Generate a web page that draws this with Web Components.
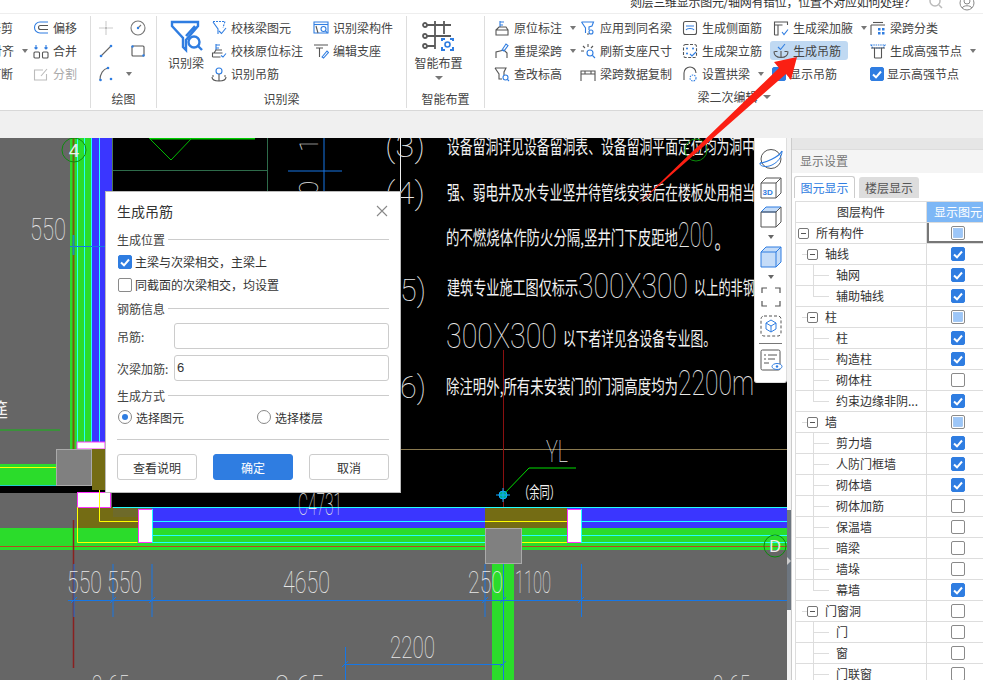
<!DOCTYPE html>
<html lang="zh">
<head>
<meta charset="utf-8">
<title>生成吊筋</title>
<style>
  html, body { margin: 0; height: 100%; overflow: hidden; background: #fff; }
  body { font: 12px "Noto Sans CJK SC", "Liberation Sans", sans-serif; color: #333; }
</style>
</head>
<body>
<gl-app></gl-app>

<script>
const B = '#2f7de1', D = '#555', G = '#bbb';

// 16x16 icons, hand drawn from the reference
const ICONS = {
  offset: `<path d="M15 2H7a5.5 5.5 0 0 0 0 11h8" stroke="${B}"/><path d="M15 5.5H7.5a2 2 0 0 0 0 4H15" stroke="${D}"/>`,
  merge: `<rect x="1" y="9" width="5.5" height="6" rx="1" stroke="${D}"/><rect x="9.5" y="9" width="5.5" height="6" rx="1" stroke="${D}"/><path d="M3 2v4M1.5 4.5 3 6l1.500-1.500M13 2v4M11.500 4.500 13 6l1.500-1.500" stroke="${B}"/>`,
  split: `<path d="M10 4H1.500v10h12V8M8 10l6-7" stroke="${G}"/>`,
  point: `<path d="M8 1v5M8 10v5M1 8h5M10 8h5" stroke="#ccc"/><circle cx="8" cy="8" r="1.500" fill="#bbb"/>`,
  gauge: `<circle cx="8" cy="8" r="7" stroke="#777"/><path d="M8 8l3-3" stroke="#777"/><circle cx="8" cy="8" r="1.200" fill="${B}"/>`,
  line: `<path d="M3 13 13 3" stroke="#666"/><circle cx="3" cy="13" r="1.300" fill="${B}"/><circle cx="13" cy="3" r="1.300" fill="${B}"/>`,
  rect: `<rect x="2" y="3" width="12" height="10" rx="1" stroke="#555"/><circle cx="2.500" cy="3.500" r="1.200" fill="${B}"/><circle cx="13.500" cy="12.500" r="1.200" fill="${B}"/>`,
  arc: `<path d="M2 14C2 8 5 3 10 2" stroke="#666"/><circle cx="2.500" cy="14" r="1.300" fill="${B}"/><circle cx="10" cy="2" r="1.300" fill="${B}"/><circle cx="13" cy="13" r="1.300" fill="${B}"/>`,
  check1: `<path d="M2 1.500h12l-2 6" stroke="${B}" stroke-dasharray="2 1"/><path d="M2 2l5 7v5" stroke="${B}"/><path d="M8 11l2.500 2.500L15 8" stroke="${B}"/>`,
  check2: `<path d="M5 1v6M5 2h4M5 5h3" stroke="${B}"/><path d="M1.500 14V10h10M1.500 14h8M3 10l2-3h6" stroke="${D}"/><path d="M10 12.500l2 1.500 3-3.500" stroke="${B}"/>`,
  anchor: `<circle cx="8" cy="5" r="3" stroke="${B}"/><path d="M1 11c0 3 3 4 7 4s7-1 7-4M8 8v7" stroke="${D}"/><path d="M1 10h2M13 10h2" stroke="${D}"/>`,
  recog: `<path d="M1 2h14v11H1z" stroke="${B}"/><path d="M1 4.500h14" stroke="${B}"/><path d="M3 6l2 7" stroke="${D}"/><circle cx="10.500" cy="9" r="2.500" stroke="${B}"/><path d="M12.500 11l2 2" stroke="${B}"/>`,
  support: `<path d="M1 2h14M3 5h7M6.500 5v9" stroke="${D}"/><path d="M9 14l5-6 1.500 1.500L10.500 15z" stroke="${B}"/>`,
  orig: `<path d="M6 1v6M6 2h4M6 5h3" stroke="${B}"/><path d="M2 15V10h12v5zM2 10l3-3h7l2 3" stroke="${D}"/>`,
  apply: `<path d="M1.500 2h12l-1.500 4-3 1v3M1.500 2l4 6v5" stroke="${B}"/><circle cx="11" cy="12" r="2" stroke="${B}"/><path d="M7 14h2" stroke="${D}"/>`,
  side: `<rect x="1.500" y="1.500" width="13" height="13" rx="2" stroke="${D}"/><path d="M4 6h8M4 10c1-2 7-2 8 0" stroke="${B}"/>`,
  haunch: `<path d="M1.500 15V2h13v3" stroke="${D}"/><path d="M1.500 5h8M5 5v10H1.500" stroke="${D}"/><path d="M9 12l2 2.500 4-5" stroke="${B}"/>`,
  kind: `<path d="M1 15V5M1 5h14" stroke="${D}"/><path d="M3 2.500h10" stroke="${D}"/><path d="M8 8h2.500v2.500H8zM12 8h2.500v2.500H12zM8 12h2.500v2.500H8zM12 12h2.500v2.500H12z" fill="${B}"/>`,
  lift: `<path d="M2 15V9l8-2 3 3v5" stroke="${D}"/><path d="M8 7l4-6 2 1.500-4 5.500z" stroke="${B}"/>`,
  refresh: `<circle cx="10" cy="10" r="3" stroke="${B}"/><path d="M12.500 12.500 15 15" stroke="${B}"/><path d="M1 8h3M3 3l2 2M8 1v3M13 3l-2 2" stroke="${D}"/>`,
  frame: `<rect x="1.500" y="1.500" width="13" height="13" rx="2" stroke="${D}" stroke-dasharray="3 1.500"/><circle cx="5" cy="5.500" r="1" fill="${B}"/><circle cx="11" cy="5.500" r="1" fill="${B}"/><circle cx="5" cy="10.500" r="1" fill="${B}"/><path d="M8 11l2 2 4-4" stroke="${B}"/>`,
  hanger: `<path d="M1 8.500c0 4 3 6 7 6s7-2 7-6M8 8v6M1.500 8.500h3M11.500 8.500h3" stroke="${D}"/><path d="M5 4l2.500 2.500L12 1" stroke="${B}"/>`,
  strong: `<path d="M1 2h14l-2 3H3z" stroke="${B}" stroke-dasharray="1.500 .8"/><path d="M1 5h14M4.500 5v10M11.500 5v10M4.500 15h7" stroke="${D}"/>`,
  query: `<path d="M1 2h11l-2 4v3M1 2l4 6v5h3" stroke="${D}"/><circle cx="11.500" cy="11.500" r="2.500" stroke="${B}"/><path d="M13.500 13.500 15 15" stroke="${B}"/>`,
  copy: `<path d="M1 15V5h14v10M1 8h14M5 5v3M11 5v3" stroke="${D}"/>`,
  arch: `<path d="M2 14V7a6 6 0 0 1 12 0" stroke="${D}"/><circle cx="11" cy="12" r="3" stroke="${B}" stroke-dasharray="1.500 1"/>`
};

class GlIcon extends HTMLElement {
  constructor() {
    super();
    const shadow = this.attachShadow({ mode: 'open' });
    const size = this.getAttribute('size') || 16;
    shadow.innerHTML = `
      <style>:host { display: inline-flex; width: ${size}px; height: ${size}px; flex: none; } svg { display: block; }</style>
      <svg width="${size}" height="${size}" viewBox="0 0 16 16" fill="none" stroke-width="1.100">${ICONS[this.getAttribute('name')] || ''}</svg>`;
  }
}
customElements.define('gl-icon', GlIcon);

class GlCheck extends HTMLElement {
  constructor() {
    super();
    const shadow = this.attachShadow({ mode: 'open' });
    const state = this.getAttribute('state') || 'off';
    let inner = '';
    if (state === 'on') inner = '<path d="M3 7.500l3 2.800L11 4.500" fill="none" stroke="#fff" stroke-width="2"/>';
    if (state === 'mixed') inner = '<rect x="2.500" y="2.500" width="9" height="9" fill="#9cc6f8" stroke="#7fb0ec" stroke-width=".5"/>';
    shadow.innerHTML = `
      <style>
        :host { display: inline-flex; width: 14px; height: 14px; flex: none; }
        .box { width: 14px; height: 14px; box-sizing: border-box; border-radius: 2px; border: 1px solid #8a8a8a; background: #fff; position: relative; overflow: hidden; }
        .on { background: ${B}; border-color: ${B}; }
        svg { position: absolute; left: -1px; top: -1px; }
      </style>
      <div class="box ${state}"><svg width="14" height="14" viewBox="0 0 14 14">${inner}</svg></div>`;
  }
}
customElements.define('gl-check', GlCheck);

class RbItem extends HTMLElement {
  constructor() {
    super();
    const shadow = this.attachShadow({ mode: 'open' });
    const icon = this.getAttribute('icon');
    const check = this.getAttribute('check');
    const lead = check ? `<gl-check state="${check}"></gl-check>` : (icon ? `<gl-icon name="${icon}"></gl-icon>` : '');
    shadow.innerHTML = `
      <style>
        :host { display: flex; align-items: center; height: 23px; white-space: nowrap; color: #444; }
        :host([disabled]) { color: #aaa; }
        .row { display: flex; align-items: center; gap: 4px; height: 19px; }
        :host([check]) .row { gap: 3px; }
        :host([active]) .row { background: #c0d9f2; border-radius: 3px; padding: 0 7px 0 3px; margin-left: -3px; }
        .caret { width: 0; height: 0; border: 3.500px solid transparent; border-top: 4px solid #777; border-bottom: 0; margin-left: 4px; }
      </style>
      <div class="row">${lead}<span><slot></slot></span>${this.hasAttribute('caret') ? '<i class="caret"></i>' : ''}</div>`;
  }
}
customElements.define('rb-item', RbItem);

class RbGroup extends HTMLElement {
  constructor() {
    super();
    const shadow = this.attachShadow({ mode: 'open' });
    shadow.innerHTML = `
      <style>
        :host { display: flex; flex-direction: column; box-sizing: border-box; height: 92px; margin-top: 2px; border-right: 1px solid #ddd; overflow: hidden; flex: none; }
        :host([noline]) { border-right: 0; overflow: visible; }
        .body { flex: 1; display: flex; }
        .label { height: 18px; line-height: 18px; text-align: center; color: #444; display: flex; justify-content: center; align-items: center; gap: 5px; }
        :host([noline]) .label { position: relative; top: -2px; }
        .caret { width: 0; height: 0; border: 4px solid transparent; border-top: 4px solid #777; border-bottom: 0; }
      </style>
      <div class="body"><slot></slot></div>
      <div class="label"><slot name="label"></slot>${this.hasAttribute('caret') ? '<i class="caret"></i>' : ''}</div>`;
  }
}
customElements.define('rb-group', RbGroup);

class GlRibbon extends HTMLElement {
  constructor() {
    super();
    const shadow = this.attachShadow({ mode: 'open' });
    shadow.innerHTML = `
      <style>
        :host { display: flex; box-sizing: border-box; height: 98px; background: #fff; border-top: 1px solid #eee; border-bottom: 1px solid #d8d8d8; overflow: hidden; }
        .rows { display: grid; grid-auto-rows: 23px; align-content: start; }
        .clip { width: 33px; display: flex; flex-direction: column; align-items: flex-end; }
        .clip rb-item { margin-right: 20px; }
        .clip rb-item.c { margin-right: 5px; }
        .big { display: flex; flex-direction: column; align-items: center; color: #444; padding-top: 3px; line-height: 16px; }
        .big svg { display: block; margin-bottom: 2px; }
        .caret { width: 0; height: 0; border: 4px solid transparent; border-top: 4px solid #777; border-bottom: 0; margin-top: 5px; }
        .hi { grid-template-columns: 86px 102px 91px 97px 112px; padding-left: 9px; }
        .draw { grid-template-columns: 32px 32px; padding-left: 7px; }
      </style>

      <rb-group style="width:91px">
        <div class="clip">
          <rb-item>修剪</rb-item>
          <rb-item class="c" caret>对齐</rb-item>
          <rb-item>打断</rb-item>
        </div>
        <div class="rows">
          <rb-item icon="offset">偏移</rb-item>
          <rb-item icon="merge">合并</rb-item>
          <rb-item icon="split" disabled>分割</rb-item>
        </div>
      </rb-group>

      <rb-group style="width:66px">
        <div class="rows draw">
          <rb-item icon="point"></rb-item><rb-item icon="gauge"></rb-item>
          <rb-item icon="line"></rb-item><rb-item icon="rect"></rb-item>
          <rb-item icon="arc" caret></rb-item>
        </div>
        <span slot="label">绘图</span>
      </rb-group>

      <rb-group style="width:250px">
        <div class="big" style="width:38px;margin:0 6px 0 10px">
          <svg width="34" height="34" viewBox="0 0 34 34" fill="none" stroke="${B}" stroke-width="2.400">
            <path d="M3 3h26v4L17 21v10L14 28V19L3 7zM26 7l-9 10"/>
            <circle cx="25" cy="23" r="5.500"/><path d="M29 27l4 4"/>
          </svg>
          <span>识别梁</span>
        </div>
        <div class="rows" style="width:102px">
          <rb-item icon="check1">校核梁图元</rb-item>
          <rb-item icon="check2">校核原位标注</rb-item>
          <rb-item icon="anchor">识别吊筋</rb-item>
        </div>
        <div class="rows">
          <rb-item icon="recog">识别梁构件</rb-item>
          <rb-item icon="support">编辑支座</rb-item>
        </div>
        <span slot="label">识别梁</span>
      </rb-group>

      <rb-group style="width:78px">
        <div class="big" style="width:100%;box-sizing:border-box;padding-right:14px">
          <svg width="34" height="34" viewBox="0 0 34 34" fill="none" stroke-width="1.800">
            <path d="M3 6h26M3 17h26M3 27h10M13 2v28M22 2v13" stroke="#5a5a5a"/>
            <circle cx="3" cy="6" r="2" fill="#fff" stroke="#5a5a5a"/><circle cx="3" cy="17" r="2" fill="#fff" stroke="#5a5a5a"/><circle cx="3" cy="27" r="2" fill="#fff" stroke="#5a5a5a"/>
            <path d="M20 22v-2h3M28 20h3v2M31 28v3h-3M23 31h-3v-3" stroke="${B}" stroke-width="2"/>
            <circle cx="25.500" cy="25.500" r="2.500" stroke="${B}" stroke-width="1.600"/>
          </svg>
          <span>智能布置</span>
          <i class="caret"></i>
        </div>
        <span slot="label">智能布置</span>
      </rb-group>

      <rb-group noline caret style="width:250px;flex:1">
        <div class="rows hi">
          <rb-item icon="orig" caret>原位标注</rb-item>
          <rb-item icon="apply">应用到同名梁</rb-item>
          <rb-item icon="side">生成侧面筋</rb-item>
          <rb-item icon="haunch" caret>生成梁加腋</rb-item>
          <rb-item icon="kind">梁跨分类</rb-item>

          <rb-item icon="lift" caret>重提梁跨</rb-item>
          <rb-item icon="refresh">刷新支座尺寸</rb-item>
          <rb-item icon="frame">生成架立筋</rb-item>
          <rb-item icon="hanger" active>生成吊筋</rb-item>
          <rb-item icon="strong" caret>生成高强节点</rb-item>

          <rb-item icon="query">查改标高</rb-item>
          <rb-item icon="copy">梁跨数据复制</rb-item>
          <rb-item icon="arch" caret>设置拱梁</rb-item>
          <rb-item check="on" style="margin-left:-1px">显示吊筋</rb-item>
          <rb-item check="on">显示高强节点</rb-item>
        </div>
        <span slot="label" style="margin-left:0">梁二次编辑</span>
      </rb-group>`;
  }
}
customElements.define('gl-ribbon', GlRibbon);

class GlTitle extends HTMLElement {
  constructor() {
    super();
    const shadow = this.attachShadow({ mode: 'open' });
    shadow.innerHTML = `
      <style>
        :host { display: flex; height: 13px; background: #fff; overflow: hidden; padding-left: 630px; align-items: flex-end; font-size: 12px; color: #333; white-space: nowrap; }
        .q { line-height: 16px; margin-bottom: 3px; width: 296px; letter-spacing: -.3px; }
        svg { flex: none; }
      </style>
      <div class="q">剡层三维显示图元/轴网有错位，位置不对应如何处理？</div>
      <svg width="16" height="16" viewBox="0 0 16 16" fill="none" stroke="#bbb" stroke-width="1.500" style="margin-left:2px;margin-bottom:2px"><circle cx="7" cy="6" r="5"/><path d="M11 10l3 3"/></svg>
      <svg width="16" height="16" viewBox="0 0 16 16" fill="none" stroke="#888" style="margin-left:15px;margin-bottom:2px"><circle cx="8" cy="8" r="7"/><circle cx="8" cy="6" r="3"/><path d="M3 13c2-3 8-3 10 0"/></svg>`;
  }
}
customElements.define('gl-title', GlTitle);

class CadCanvas extends HTMLElement {
  constructor() {
    super();
    const shadow = this.attachShadow({ mode: 'open' });
    shadow.innerHTML = `
      <style>
        :host { display: block; width: 787px; height: 542px; flex: none; background: #666; overflow: hidden; }
        svg { display: block; }
        .cn { font: 400 19px "Noto Sans CJK SC", sans-serif; fill: #f2f2f2; }
        .num { font: 100 31px Roboto, "Liberation Sans", sans-serif; fill: #e8e8e8; }
        .big { font-size: 35px; }
      </style>
      <svg width="787" height="542" viewBox="0 138 787 542">
        <rect x="0" y="138" width="787" height="542" fill="#666"/>
        <rect x="112" y="138" width="675" height="370" fill="#000"/>

        <!-- axis 4 wall -->
        <rect x="70" y="138" width="24" height="312" fill="#2bdc2b"/>
        <rect x="92" y="138" width="20" height="312" fill="#3a36ff"/>
        <path d="M77.500 138v312M84.500 138v312M91.500 138v312M99.500 138v312" stroke="#2ff" stroke-width="1"/>
        <path d="M73.500 138v312" stroke="#7a5a10" stroke-width="2"/>
        <path d="M112.500 138v312" stroke="#4f7a4f"/>
        <circle cx="74" cy="150" r="12" fill="none" stroke="#0f8a0f"/>
        <text x="74" y="157" text-anchor="middle" font-family="Liberation Sans" font-size="19" fill="#eee">4</text>
        <text class="num" x="30" y="240" textLength="36" lengthAdjust="spacingAndGlyphs">550</text>
        <path d="M70 246.500h35" stroke="#1677e6"/><path d="M73.500 235v20" stroke="#1c8fb0" stroke-width="2"/>

        <!-- left bits -->
        <text class="cn" x="-11" y="417">筵</text>
        <path d="M0 430h60" stroke="#2ea02e" stroke-width="1.500"/>
        <rect x="0" y="464" width="56" height="22" fill="#2bdc2b"/><path d="M0 467.500h56" stroke="#ff0"/>
        <rect x="0" y="486" width="112" height="7" fill="#000"/><path d="M0 485.500h112" stroke="#2cc"/>

        <!-- top-of-drawing lines -->
        <path d="M150 138.500h105" stroke="#0c0" stroke-width="2"/>
        <path d="M149 138l22 22 21-22" fill="none" stroke="#0b0"/>
        <path d="M113 170.500h154M267.500 138v60" stroke="#2e6b4a"/>
        <path d="M288 171h54M324 138v60" stroke="#1677e6"/>
        <text class="num" transform="translate(318 152) rotate(-90)" style="font-size:26px">14</text>
        <text class="num" transform="translate(318 195) rotate(-90)" style="font-size:26px">0</text>
        <path d="M400.500 138v300" stroke="#eee"/>

        <!-- notes -->
        <g class="cad">
          <text class="num" x="385" y="157" textLength="40" lengthAdjust="spacingAndGlyphs">(3)</text>
          <text class="cn" x="447" y="154" textLength="308" lengthAdjust="spacingAndGlyphs">设备留洞详见设备留洞表、设备留洞平面定位均为洞中</text>
          <text class="num" x="385" y="204" textLength="40" lengthAdjust="spacingAndGlyphs">(4)</text>
          <text class="cn" x="447" y="200" textLength="308" lengthAdjust="spacingAndGlyphs">强、弱电井及水专业竖井待管线安装后在楼板处用相当</text>
          <text class="cn" x="446" y="245" textLength="232" lengthAdjust="spacingAndGlyphs">的不燃烧体作防火分隔,竖井门下皮距地</text>
          <text class="num big" x="678" y="247" textLength="57" lengthAdjust="spacingAndGlyphs">200。</text>
          <text class="num" x="400" y="301" textLength="26" lengthAdjust="spacingAndGlyphs">5)</text>
          <text class="cn" x="447" y="295" textLength="131" lengthAdjust="spacingAndGlyphs">建筑专业施工图仅标示</text>
          <text class="num big" x="578" y="298" textLength="110" lengthAdjust="spacingAndGlyphs">300X300</text>
          <text class="cn" x="694" y="295" textLength="61" lengthAdjust="spacingAndGlyphs">以上的非钢</text>
          <text class="num big" x="446" y="348" textLength="111" lengthAdjust="spacingAndGlyphs">300X300</text>
          <text class="cn" x="563" y="346" textLength="153" lengthAdjust="spacingAndGlyphs">以下者详见各设备专业图。</text>
          <text class="num" x="400" y="398" textLength="26" lengthAdjust="spacingAndGlyphs">6)</text>
          <text class="cn" x="446" y="394" textLength="232" lengthAdjust="spacingAndGlyphs">除注明外,所有未安装门的门洞高度均为</text>
          <text class="num big" x="678" y="395" textLength="76" lengthAdjust="spacingAndGlyphs">2200m</text>
        </g>
        <circle cx="696" cy="150" r="11" fill="none" stroke="#0a8a0a"/>

        <path d="M113 449.500h674" stroke="#8a7a50"/>
        <path d="M503.500 350v172" stroke="#8a1010"/>

        <!-- beam D -->
        <rect x="77" y="442" width="28" height="7" fill="#fff" stroke="#f3f" stroke-width="1"/>
        <rect x="92" y="449" width="14" height="41" fill="#746c14"/>
        <rect x="77" y="507" width="61" height="21" fill="#746c14"/>
        <rect x="113" y="508" width="25" height="9" fill="#6e6a2a"/>
        <rect x="0" y="528" width="138" height="15" fill="#2bdc2b"/>
        <rect x="77.500" y="492.500" width="33" height="15" fill="#fff" stroke="#f3f"/>
        <rect x="152" y="508" width="635" height="20" fill="#3a36ff"/>
        <rect x="152" y="528" width="635" height="15" fill="#2bdc2b"/>
        <rect x="485" y="508" width="82" height="20" fill="#746c14"/>
        <path d="M113 507.500h674M152 521.500h635M152 535.500h635M152 542.500h635" stroke="#2ff"/>
        <path d="M99.500 490v31.500h39M77.500 507v35.500h60M485 521.500h82M521 542.500h46" stroke="#ff0" fill="none"/>
        <rect x="138.500" y="509.500" width="14" height="33" fill="#fff" stroke="#f3f"/>
        <rect x="567.500" y="509.500" width="14" height="33" fill="#fff" stroke="#f3f"/>
        <path d="M152.500 509v34M581.500 509v34" stroke="#2ff"/>
        <rect x="0" y="543" width="787" height="7" fill="#2bdc2b"/>
        <path d="M0 546.500h787" stroke="#b54a20"/>

        <!-- columns -->
        <rect x="56.500" y="449.500" width="35" height="36" fill="#808080" stroke="#aaa"/>
        <rect x="492" y="564" width="22" height="116" fill="#2bdc2b"/>
        <rect x="485.500" y="528.500" width="36" height="35" fill="#808080" stroke="#aaa"/>
        <path d="M73.500 520v148" stroke="#8a2020" stroke-width="1.500"/>
        <path d="M503.500 618v28" stroke="#8a2020"/>
        <path d="M503.500 564v116" stroke="#1677e6"/>

        <!-- leader -->
        <path d="M503 495l26-27h47" stroke="#0d0" fill="none"/>
        <circle cx="503" cy="495" r="4" fill="#0a8" stroke="#1af"/>
        <path d="M496 495h14M503 488v14" stroke="#1af"/>
        <text class="num" x="546" y="462" textLength="22" lengthAdjust="spacingAndGlyphs">YL</text>
        <text class="cn" x="519" y="498" textLength="41" lengthAdjust="spacingAndGlyphs" style="font-size:16px">（余同）</text>
        <text class="num" x="298" y="515" textLength="44" lengthAdjust="spacingAndGlyphs">C4731</text>
        <circle cx="775" cy="546" r="11" fill="none" stroke="#0a8a0a"/>
        <text x="775" y="552" text-anchor="middle" font-family="Liberation Sans" font-size="16" fill="#eee">D</text>

        <!-- dimensions -->
        <path d="M68 600.500h719M345 664.500h158" stroke="#1677e6"/>
        <path d="M74 564v53M113 564v53M152 564v53M485 564v53M581.500 564v53M345.500 647v33" stroke="#1677e6"/>
        <path d="M71 603l6-6M110 603l6-6M149 603l6-6M482 603l6-6M500 603l6-6M578 603l6-6M342 667l6-6M500 667l6-6" stroke="#1677e6"/>
        <text class="num" x="67" y="593" textLength="35" lengthAdjust="spacingAndGlyphs">550</text>
        <text class="num" x="107" y="593" textLength="35" lengthAdjust="spacingAndGlyphs">550</text>
        <text class="num" x="283" y="593" textLength="47" lengthAdjust="spacingAndGlyphs">4650</text>
        <text class="num" x="468" y="593" textLength="35" lengthAdjust="spacingAndGlyphs">250</text>
        <text class="num" x="515" y="593" textLength="36" lengthAdjust="spacingAndGlyphs">1100</text>
        <text class="num" x="390" y="658" textLength="45" lengthAdjust="spacingAndGlyphs">2200</text>
        <text class="num" x="79" y="697" textLength="50" lengthAdjust="spacingAndGlyphs">φ8-65</text>
        <text class="num" x="258" y="697" textLength="66" lengthAdjust="spacingAndGlyphs">φ8-65</text>
        <text class="num" x="700" y="697" textLength="50" lengthAdjust="spacingAndGlyphs">φ8-65</text>
      </svg>`;
  }
}
customElements.define('cad-canvas', CadCanvas);

class ViewBar extends HTMLElement {
  constructor() {
    super();
    const shadow = this.attachShadow({ mode: 'open' });
    const s = '#555';
    shadow.innerHTML = `
      <style>
        :host { position: absolute; left: 754px; top: 0; width: 33px; height: 245px; box-sizing: border-box; background: #fff; border: 1px solid #ddd; border-top: 0; border-radius: 0 0 3px 3px; display: flex; flex-direction: column; align-items: center; padding-top: 9px; }
        svg { display: block; flex: none; }
        .caret { width: 0; height: 0; border: 3.500px solid transparent; border-top: 4px solid #666; border-bottom: 0; margin: 6px 0 6px; }
        hr { width: 23px; border: 0; border-top: 1px solid #777; margin: 5px 0 4px; }
      </style>
      <svg width="24" height="24" viewBox="0 0 24 24" fill="none" stroke="${s}"><ellipse cx="12" cy="12" rx="10" ry="9.500"/><path d="M1 16C6 16 20 10 23 4" stroke="${B}" stroke-width="1.300"/><path d="M1 16c-1 3 6 5 12 2s10-8 10-14" stroke="${B}"/></svg>
      <svg style="margin-top:5px" width="24" height="24" viewBox="0 0 24 24" fill="none" stroke="${s}"><path d="M2 7l5-5h15v15l-5 5H2zM2 7h15v15M17 7l5-5"/><text x="3.500" y="19" font-family="Liberation Sans" font-size="8" font-weight="700" fill="${B}" stroke="none">3D</text></svg>
      <svg style="margin-top:5px" width="24" height="24" viewBox="0 0 24 24" fill="none" stroke="${s}"><path d="M2 7l5-5h15l-5 5z" fill="#c5dcf8" stroke="${B}"/><path d="M2 7h15v15H2zM17 7l5-5v15l-5 5"/></svg>
      <i class="caret"></i>
      <svg width="24" height="24" viewBox="0 0 24 24" fill="#c5dcf8" stroke="${B}"><path d="M2 7l5-5h15v15l-5 5H2z"/><path d="M2 7h15v15M17 7l5-5" fill="none"/></svg>
      <i class="caret"></i>
      <svg width="24" height="24" viewBox="0 0 24 24" fill="none" stroke="${s}" stroke-width="1.200"><path d="M3 8V3h5M16 3h5v5M21 16v5h-5M8 21H3v-5"/></svg>
      <svg style="margin-top:5px" width="24" height="24" viewBox="0 0 24 24" fill="none" stroke="${s}"><rect x="2" y="2" width="20" height="20" rx="3" stroke-dasharray="3 2"/><path d="M12 6l5 3v6l-5 3-5-3V9zM7 9l5 3 5-3M12 12v6" stroke="${B}"/></svg>
      <hr>
      <svg width="24" height="24" viewBox="0 0 24 24" fill="none" stroke="${s}"><rect x="2" y="2" width="19" height="20" rx="1.500"/><path d="M5 7h2M9 7h9M5 11h2M9 11h7M5 15h5"/><ellipse cx="18" cy="18.500" rx="5" ry="3" fill="#fff" stroke="${B}"/><circle cx="18" cy="18.500" r="1.200" fill="${B}" stroke="none"/></svg>`;
  }
}
customElements.define('view-bar', ViewBar);

class DlgSection extends HTMLElement {
  constructor() {
    super();
    const shadow = this.attachShadow({ mode: 'open' });
    shadow.innerHTML = `
      <style>
        :host { display: flex; align-items: center; gap: 3px; height: 18px; color: #444; }
        i { flex: 1; border-top: 1px solid #ccc; }
      </style>
      <slot></slot><i></i>`;
  }
}
customElements.define('dlg-section', DlgSection);

class DlgButton extends HTMLElement {
  constructor() {
    super();
    const shadow = this.attachShadow({ mode: 'open' });
    shadow.innerHTML = `
      <style>
        :host { display: flex; align-items: center; justify-content: center; width: 80px; height: 26px; box-sizing: border-box; border: 1px solid #ccc; border-radius: 3px; background: #fff; color: #333; }
        :host([primary]) { background: ${B}; border-color: ${B}; color: #fff; }
      </style>
      <slot></slot>`;
  }
}
customElements.define('dlg-button', DlgButton);

class HangerDialog extends HTMLElement {
  constructor() {
    super();
    const shadow = this.attachShadow({ mode: 'open' });
    shadow.innerHTML = `
      <style>
        :host { position: absolute; left: 105px; top: 53px; width: 296px; height: 302px; box-sizing: border-box; background: #fff; border: 1px solid #bbb; padding: 0 11px; color: #333; display: block; }
        .title { display: flex; justify-content: space-between; align-items: center; height: 37px; font-size: 14px; }
        .title svg { margin-right: 1px; }
        .opt { display: flex; align-items: center; gap: 3px; height: 23px; padding-left: 1px; }
        .field { display: flex; align-items: center; height: 26px; }
        .field label { width: 57px; flex: none; color: #444; }
        .input { flex: 1; height: 26px; box-sizing: border-box; border: 1px solid #ccc; border-radius: 3px; padding-left: 2px; line-height: 24px; font-family: "Liberation Sans", sans-serif; font-size: 13px; }
        .radios { display: flex; height: 22px; align-items: center; margin-top: 2px; padding-left: 1px; }
        .radio { display: flex; align-items: center; gap: 4px; width: 139px; flex: none; }
        .radio i { width: 14px; height: 14px; box-sizing: border-box; border: 1px solid #888; border-radius: 50%; display: grid; place-items: center; }
        .radio i.on::after { content: ""; width: 6px; height: 6px; border-radius: 50%; background: ${B}; }
        hr { border: 0; border-top: 1px solid #ccc; margin: 11px 0 14px; }
        .btns { display: flex; justify-content: space-between; }
      </style>
      <div class="title"><span>生成吊筋</span>
        <svg width="12" height="12" viewBox="0 0 12 12" stroke="#888" stroke-width="1.100"><path d="M1 1l10 10M11 1 1 11"/></svg>
      </div>
      <dlg-section style="margin-top:1px">生成位置</dlg-section>
      <div class="opt" style="margin-top:2px"><gl-check state="on"></gl-check>主梁与次梁相交，主梁上</div>
      <div class="opt"><gl-check></gl-check>同截面的次梁相交，均设置</div>
      <dlg-section style="margin-top:3px">钢筋信息</dlg-section>
      <div class="field" style="margin-top:6px"><label>吊筋:</label><div class="input"></div></div>
      <div class="field" style="margin-top:6px"><label>次梁加筋:</label><div class="input">6</div></div>
      <dlg-section style="margin-top:5px">生成方式</dlg-section>
      <div class="radios">
        <div class="radio"><i class="on"></i>选择图元</div>
        <div class="radio"><i></i>选择楼层</div>
      </div>
      <hr>
      <div class="btns">
        <dlg-button>查看说明</dlg-button>
        <dlg-button primary>确定</dlg-button>
        <dlg-button>取消</dlg-button>
      </div>`;
  }
}
customElements.define('hanger-dialog', HangerDialog);

class TreeRow extends HTMLElement {
  constructor() {
    super();
    const shadow = this.attachShadow({ mode: 'open' });
    const level = +this.getAttribute('level');
    const state = this.getAttribute('state') || 'off';
    const pad = [2, 11, 40][level];
    const box = level < 2 ? '<i class="exp"></i>' : '';
    shadow.innerHTML = `
      <style>
        :host { display: grid; grid-template-columns: 131px 62px; height: 21px; box-sizing: border-box; border-bottom: 1px solid #ddd; color: #333; }
        .name { display: flex; align-items: center; padding-left: ${pad}px; gap: 7px; position: relative; border-right: 1px solid #ddd; white-space: nowrap; }
        .name span { padding-bottom: 1px; }
        .exp { width: 11px; height: 11px; box-sizing: border-box; border: 1px solid #777; border-radius: 2px; position: relative; background: #fff; z-index: 1; }
        .exp::after { content: ""; position: absolute; left: 2px; right: 2px; top: 4px; border-top: 1px solid #555; }
        .hl { position: absolute; left: ${level === 2 ? 17 : 6}px; width: ${level === 2 ? 16 : 5}px; top: 10px; border-top: 1px solid #ddd; }
        .vl { position: absolute; left: ${level === 2 ? 17 : 6}px; top: 0; bottom: ${this.hasAttribute('last') ? 10 : -1}px; border-left: 1px solid #ddd; }
        .cell { display: grid; place-items: center; }
        :host([current]) .cell { box-shadow: inset 2px 0 #777, inset 0 -2px #777; }
      </style>
      <div class="name">${level ? '<i class="hl"></i>' : ''}${level === 2 ? '<i class="vl"></i>' : ''}${box}<span>${this.getAttribute('label')}</span></div>
      <div class="cell"><gl-check state="${state}"></gl-check></div>`;
  }
}
customElements.define('tree-row', TreeRow);

class DisplayPanel extends HTMLElement {
  constructor() {
    super();
    const shadow = this.attachShadow({ mode: 'open' });
    const rows = [
      [0, '所有构件', 'mixed'], [1, '轴线', 'on'], [2, '轴网', 'on'], [2, '辅助轴线', 'on', 1],
      [1, '柱', 'mixed'], [2, '柱', 'on'], [2, '构造柱', 'on'], [2, '砌体柱', 'off'], [2, '约束边缘非阴...', 'on', 1],
      [1, '墙', 'mixed'], [2, '剪力墙', 'on'], [2, '人防门框墙', 'on'], [2, '砌体墙', 'on'], [2, '砌体加筋', 'off'],
      [2, '保温墙', 'off'], [2, '暗梁', 'off'], [2, '墙垛', 'off'], [2, '幕墙', 'on', 1],
      [1, '门窗洞', 'off'], [2, '门', 'off'], [2, '窗', 'off'], [2, '门联窗', 'off']
    ];
    const html = rows.map((r, i) => `<tree-row level="${r[0]}" label="${r[1]}" state="${r[2]}"${r[3] ? ' last' : ''}${i === 0 ? ' current' : ''}></tree-row>`).join('');
    shadow.innerHTML = `
      <style>
        :host { display: flex; flex-direction: column; width: 192px; height: 542px; flex: none; background: #fff; overflow: hidden; border-left: 1px solid #ccc; box-sizing: border-box; }
        .strip { height: 11px; background: #e6e6e6; flex: none; }
        .head { height: 23px; line-height: 21px; padding-left: 8px; background: #f4f4f4; color: #777; font-size: 12px; flex: none; border-top: 1px solid #ddd; }
        .tabs { display: flex; gap: 4px; padding: 3px 0 0 2px; height: 22px; margin-bottom: 3px; flex: none; align-items: flex-end; }
        .tab { height: 21px; width: 60px; display: grid; place-items: center; font-size: 12px; background: #ddd; color: #555; border-radius: 3px 3px 0 0; }
        .tab.on { background: #fff; color: ${B}; border: 1px solid #ccc; border-bottom: 0; height: 22px; width: 61px; box-sizing: border-box; }
        .table { margin-left: 3px; width: 194px; flex: none; border-top: 1px solid #ddd; border-left: 1px solid #ddd; }
        .th { display: grid; grid-template-columns: 131px 62px; height: 20px; line-height: 19px; text-align: center; border-bottom: 1px solid #ddd; }
        .th b { font-weight: 400; background: #7db7f6; color: #fff; }
        .th span { border-right: 1px solid #ddd; }
      </style>
      <div class="strip"></div>
      <div class="head">显示设置</div>
      <div class="tabs"><div class="tab on">图元显示</div><div class="tab">楼层显示</div></div>
      <div class="table">
        <div class="th"><span>图层构件</span><b>显示图元</b></div>
        ${html}
      </div>`;
  }
}
customElements.define('display-panel', DisplayPanel);

class GlApp extends HTMLElement {
  constructor() {
    super();
    const shadow = this.attachShadow({ mode: 'open' });
    shadow.innerHTML = `
      <style>
        :host { display: flex; flex-direction: column; position: relative; width: 983px; height: 680px; overflow: hidden; }
        .strip { height: 27px; flex: none; background: #f0f0f0; }
        .work { position: relative; display: flex; flex: 1; min-height: 0; }
        .split { width: 4px; flex: none; background: #f2f2f2; position: relative; }
        .split i { position: absolute; left: 0; top: 372px; width: 4px; height: 100px; background: #6d7680; }
        .split u { position: absolute; left: 0; top: 419px; border: 4px solid transparent; border-left: 4px solid #ccc; border-right: 0; }
        .arrow { position: absolute; left: 0; top: 0; pointer-events: none; }
      </style>
      <gl-title></gl-title>
      <gl-ribbon></gl-ribbon>
      <div class="strip"></div>
      <div class="work">
        <cad-canvas></cad-canvas>
        <div class="split"><i></i><u></u></div>
        <display-panel></display-panel>
        <view-bar></view-bar>
        <hanger-dialog></hanger-dialog>
      </div>
      <svg class="arrow" width="983" height="680"><path d="M636 206 779 68 774 62 797 57 791 80 786 74Z" fill="#fb1f13"/></svg>`;
  }
}
customElements.define('gl-app', GlApp);
</script>
</body>
</html>
